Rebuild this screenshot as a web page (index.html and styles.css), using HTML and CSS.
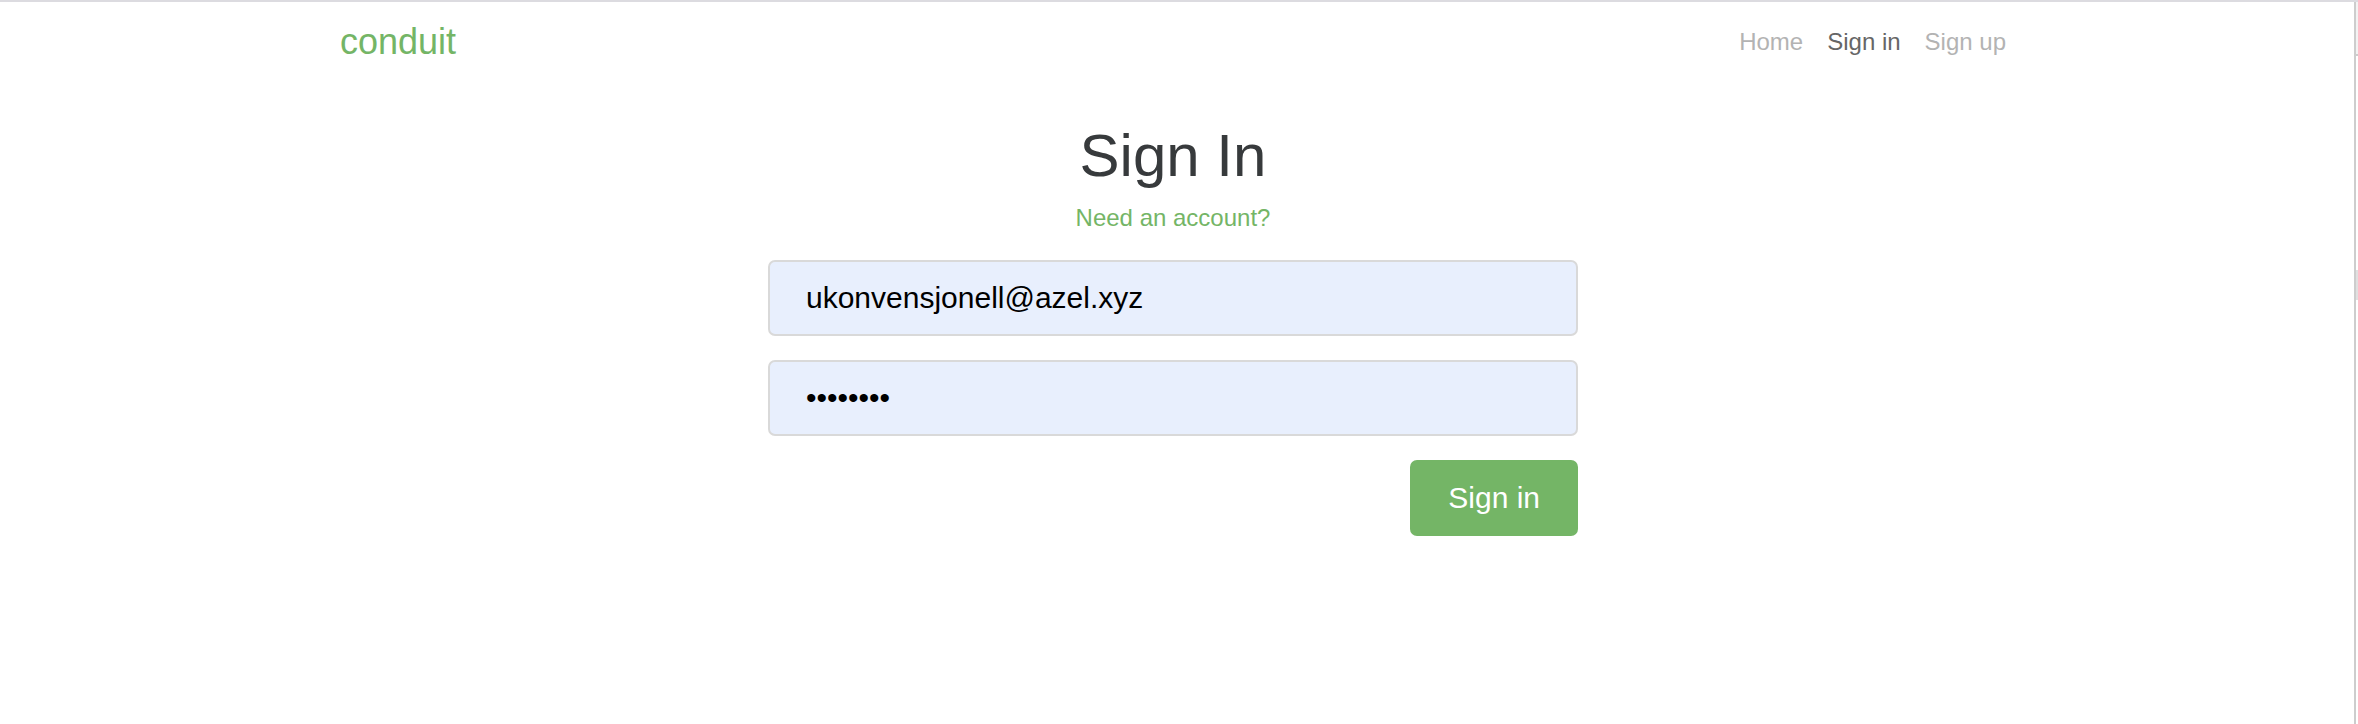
FILE: index.html
```html
<!DOCTYPE html>
<html lang="en">
<head>
<meta charset="utf-8">
<title>Conduit</title>
<link rel="stylesheet" href="styles.css">
</head>
<body>
<div class="window">
  <div class="page">
    <nav class="navbar">
      <div class="container navbar-row">
        <a class="navbar-brand" href="#">conduit</a>
        <ul class="nav">
          <li><a class="nav-link" href="#">Home</a></li>
          <li><a class="nav-link active" href="#">Sign in</a></li>
          <li><a class="nav-link" href="#">Sign up</a></li>
        </ul>
      </div>
    </nav>
    <main class="container auth-page">
      <div class="auth-column">
        <h1 class="auth-title">Sign In</h1>
        <p class="auth-hint"><a href="#">Need an account?</a></p>
        <form class="auth-form">
          <input class="form-control" type="email" aria-label="Email" value="ukonvensjonell@azel.xyz">
          <input class="form-control" type="password" aria-label="Password" value="password">
          <button class="btn" type="button">Sign in</button>
        </form>
      </div>
    </main>
  </div>
  <aside class="side-panel">
    <div class="panel-toolbar"></div>
    <div class="panel-row"></div>
  </aside>
</div>
</body>
</html>
```

FILE: styles.css
```css
* {
  box-sizing: border-box;
}

body {
  margin: 0;
  background: #fff;
  color: #373a3c;
  font-family: "Liberation Sans", Arial, Helvetica, sans-serif;
  font-size: 24px;
  line-height: 36px;
}

a {
  color: #74b566;
  text-decoration: none;
}

.window {
  display: flex;
  min-height: 100vh;
  border-top: 2px solid #dcdbe0;
}

.page {
  flex: 1;
  padding-right: 8px;
}

.container {
  max-width: 1710px;
  margin: 0 auto;
  padding: 0 22px;
}

.navbar {
  padding: 12px 0;
}

.navbar-row {
  display: flex;
  justify-content: space-between;
  align-items: flex-start;
}

.navbar-brand {
  font-size: 36px;
  line-height: 56px;
}

.nav {
  display: flex;
  gap: 24px;
  margin: 0;
  padding: 0;
  list-style: none;
}

.nav-link {
  display: block;
  padding: 10px 0;
  color: #b3b3b3;
}

.nav-link.active {
  color: #666;
}

.auth-page {
  margin-top: 40px;
}

.auth-column {
  width: 100%;
  max-width: 810px;
  margin: 0 auto;
}

.auth-title {
  margin: 0 0 10px;
  font-size: 60px;
  font-weight: 400;
  line-height: 68px;
  text-align: center;
}

.auth-hint {
  margin: 0 0 24px;
  text-align: center;
}

.auth-form {
  display: flex;
  flex-direction: column;
  gap: 24px;
}

.form-control {
  width: 100%;
  height: 76px;
  padding: 0 36px;
  border: 2px solid #d9d9d9;
  border-radius: 7px;
  background: #e8effd;
  color: #000;
  font: inherit;
  font-size: 30px;
}

.btn {
  align-self: flex-end;
  height: 76px;
  padding: 0 38px;
  border: 0;
  border-radius: 7px;
  background: #74b566;
  color: #fff;
  font: inherit;
  font-size: 30px;
}

.side-panel {
  width: 4px;
  border-left: 2px solid #cdcdcd;
}

.panel-toolbar {
  height: 54px;
  border-bottom: 2px solid #cdcdcd;
  background: #f3f3f3;
}

.panel-row {
  height: 30px;
  margin-top: 214px;
  background: #e0e0e0;
}
```
